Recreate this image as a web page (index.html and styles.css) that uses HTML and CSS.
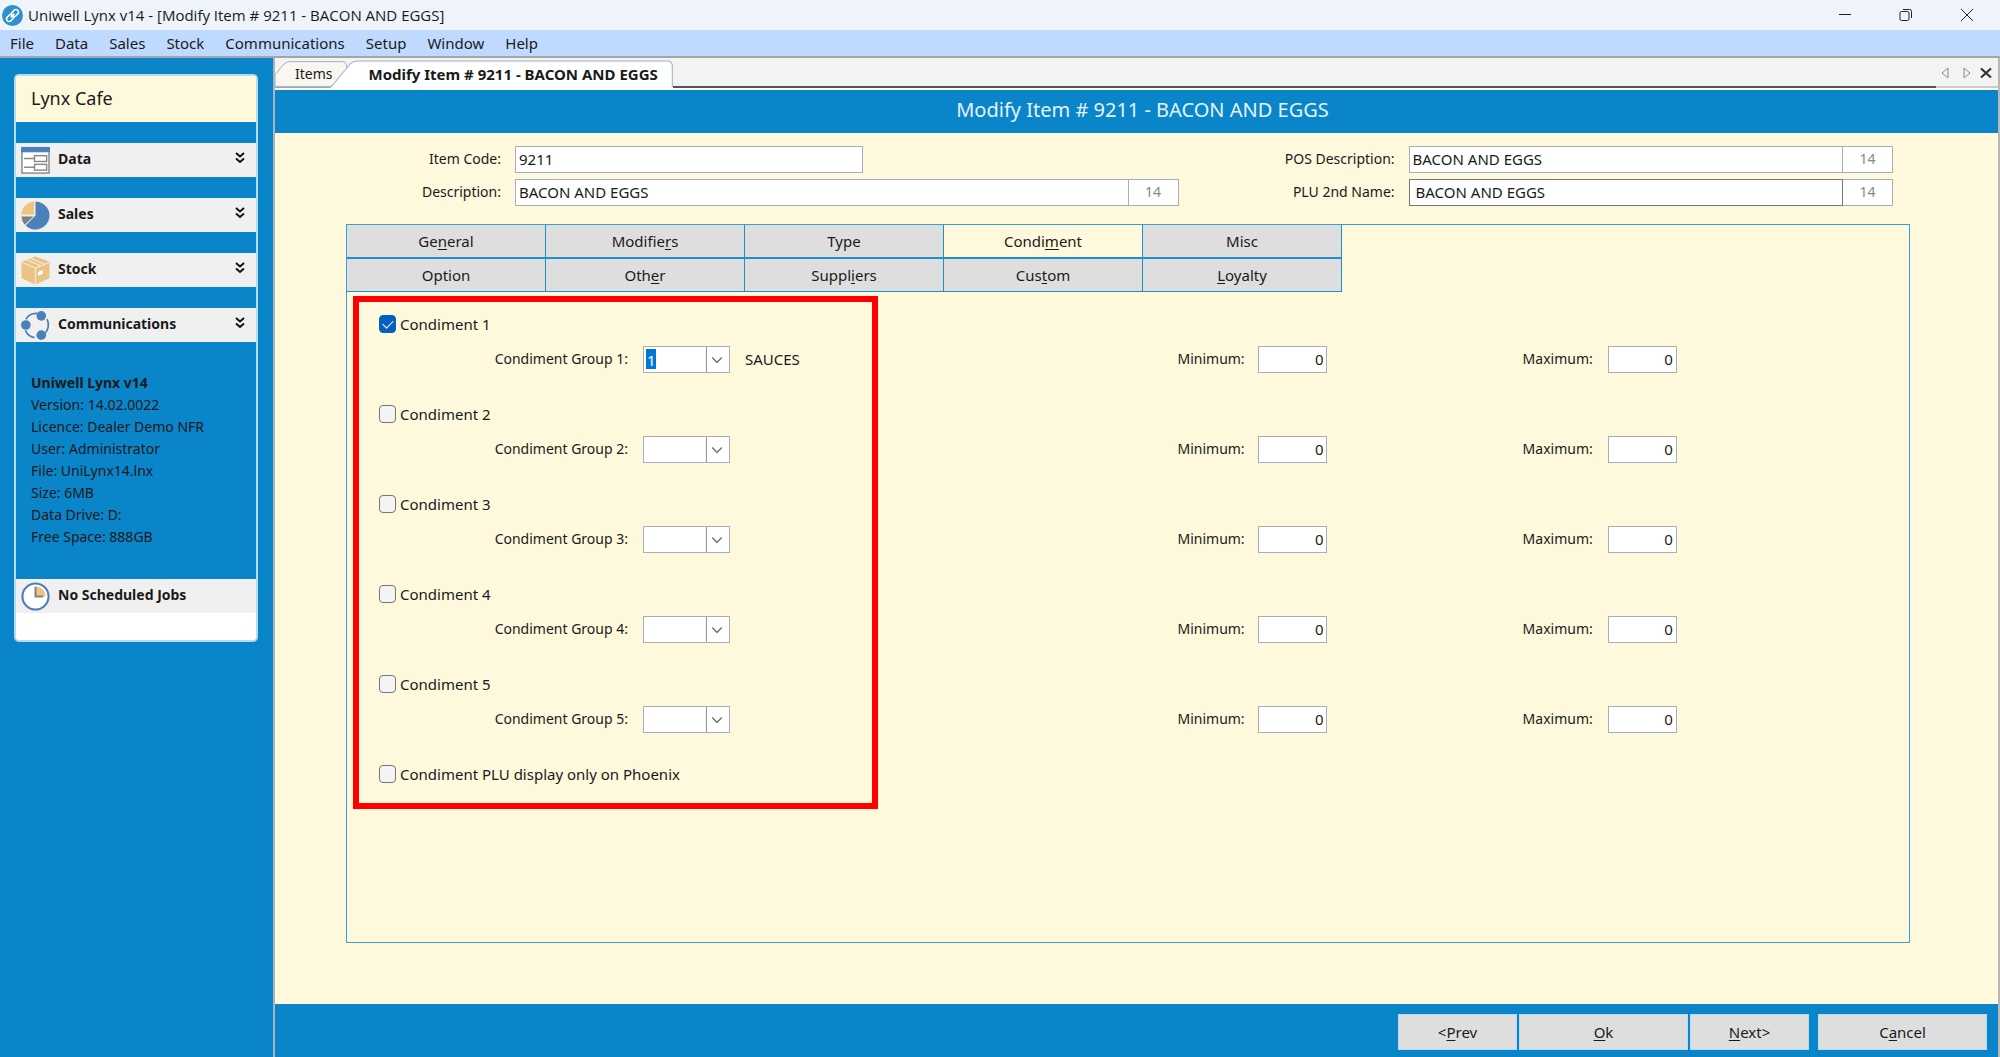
FILE: index.html
```html
<!DOCTYPE html>
<html lang="en">
<head>
    <meta charset="UTF-8">
    <meta name="viewport" content="width=device-width, initial-scale=1.0">
    <title>Uniwell Lynx v14</title>
    <link rel="stylesheet" href="styles.css">
</head>
<body>
    <header class="titlebar">
        <svg class="app-icon" viewBox="0 0 20 20">
            <circle cx="10" cy="10" r="10" fill="#2f8fcf"/>
            <g fill="none" stroke="#fff" stroke-width="1.4" transform="rotate(-45 10 10)">
                <rect x="3" y="7.6" width="7.6" height="4.8" rx="2.4"/>
                <rect x="9.4" y="7.6" width="7.6" height="4.8" rx="2.4"/>
                <path d="M7.5 10h5"/>
            </g>
        </svg>
        <span class="window-title">Uniwell Lynx v14 - [Modify Item # 9211 - BACON AND EGGS]</span>
        <div class="window-buttons">
            <button type="button" aria-label="Minimize"><svg viewBox="0 0 14 14"><path d="M1 6.5h12"/></svg></button>
            <button type="button" aria-label="Restore"><svg viewBox="0 0 14 14"><rect x="1" y="3.5" width="9" height="9" rx="1.5"/><path d="M4 1.5h6.500a2 2 0 0 1 2 2v6.500"/></svg></button>
            <button type="button" aria-label="Close"><svg viewBox="0 0 14 14"><path d="M1 1l12 12M13 1L1 13"/></svg></button>
        </div>
    </header>
    <nav class="menubar">
        <a href="#">File</a>
        <a href="#">Data</a>
        <a href="#">Sales</a>
        <a href="#">Stock</a>
        <a href="#">Communications</a>
        <a href="#">Setup</a>
        <a href="#">Window</a>
        <a href="#">Help</a>
    </nav>

    <div class="workspace">
        <aside class="sidebar">
            <div class="side-panel">
                <div class="site-name">Lynx Cafe</div>
                <button type="button" class="side-item">
                    <svg class="side-icon" viewBox="0 0 30 28">
                        <rect x="1" y="1" width="28" height="26" fill="#fff" stroke="#8a8a8a" stroke-width="1.5"/>
                        <rect x="0" y="0" width="30" height="5.500" fill="#4c80bb"/>
                        <g fill="none" stroke="#8a8a8a" stroke-width="1.5">
                            <path d="M3 12h11M3 21h11"/>
                            <rect x="14" y="9" width="12.500" height="6" fill="#fff"/>
                            <rect x="14" y="18" width="12.500" height="6" fill="#fff"/>
                        </g>
                    </svg>
                    <span>Data</span>
                    <svg class="chevrons" viewBox="0 0 10 12"><path d="M1 1l4 3.500 4-3.500M1 6.500l4 3.500 4-3.500"/></svg>
                </button>
                <button type="button" class="side-item">
                    <svg class="side-icon" viewBox="0 0 30 30">
                        <path d="M15 0.500a14.500 14.500 0 1 1-10.200 24.800L15 15z" fill="#4c80bb"/>
                        <path d="M13.500 0.500V14H0.500A14 14 0 0 1 13.500 0.500z" fill="#ecc67f"/>
                        <path d="M0.500 16h12.500l-9.200 8.500A14 14 0 0 1 0.500 16z" fill="#808080"/>
                    </svg>
                    <span>Sales</span>
                    <svg class="chevrons" viewBox="0 0 10 12"><path d="M1 1l4 3.500 4-3.500M1 6.500l4 3.500 4-3.500"/></svg>
                </button>
                <button type="button" class="side-item">
                    <svg class="side-icon" viewBox="0 0 30 30">
                        <path d="M15 0.500l14.500 5.500v17L15 29.500 0.500 23V6z" fill="#eac284"/>
                        <path d="M0.500 6.500L15 12.500 29.500 6.500M15 12.500v17M6 4l14 6M10 2.500l14.500 6" fill="none" stroke="#f8ead2" stroke-width="1.2"/>
                        <path d="M17.500 16.500l5-2v4l-5 2z" fill="#fff"/>
                    </svg>
                    <span>Stock</span>
                    <svg class="chevrons" viewBox="0 0 10 12"><path d="M1 1l4 3.500 4-3.500M1 6.500l4 3.500 4-3.500"/></svg>
                </button>
                <button type="button" class="side-item">
                    <svg class="side-icon" viewBox="0 0 30 30">
                        <g fill="none" stroke="#4c80bb" stroke-width="1.8">
                            <path d="M5 8.500A13 13 0 0 1 17 2.500"/>
                            <path d="M27 8.500A13 13 0 0 1 24 24"/>
                            <path d="M4.500 20A13 13 0 0 0 14 27.500"/>
                        </g>
                        <g fill="#4c80bb">
                            <circle cx="21" cy="5" r="5"/>
                            <circle cx="5" cy="14.500" r="5"/>
                            <circle cx="21" cy="25" r="5"/>
                        </g>
                    </svg>
                    <span>Communications</span>
                    <svg class="chevrons" viewBox="0 0 10 12"><path d="M1 1l4 3.500 4-3.500M1 6.500l4 3.500 4-3.500"/></svg>
                </button>
                <div class="side-info">
                    <strong>Uniwell Lynx v14</strong>
                    <span>Version: 14.02.0022</span>
                    <span>Licence: Dealer Demo NFR</span>
                    <span>User: Administrator</span>
                    <span>File: UniLynx14.lnx</span>
                    <span>Size: 6MB</span>
                    <span>Data Drive: D:</span>
                    <span>Free Space: 888GB</span>
                </div>
                <div class="side-jobs">
                    <svg class="side-icon" viewBox="0 0 30 30">
                        <circle cx="15" cy="15" r="13.500" fill="#fff" stroke="#4c80bb" stroke-width="2.200"/>
                        <path d="M15 4.500A10.500 10.500 0 0 1 25.500 15H15z" fill="#ecc67f"/>
                        <path d="M15 5v10h8" fill="none" stroke="#808080" stroke-width="2"/>
                    </svg>
                    <span>No Scheduled Jobs</span>
                </div>
            </div>
        </aside>

        <main class="document">
            <div class="doc-tabs">
                <a href="#" class="doc-tab">
                    <svg class="tab-shape" viewBox="0 0 76 27"><path d="M0 15L9 4Q12 1 16 1H70Q75 1 75 6V27H0z"/></svg>
                    <span>Items</span>
                </a>
                <a href="#" class="doc-tab active">
                    <svg class="tab-shape" viewBox="0 0 340 27" preserveAspectRatio="none"><path d="M0 27L19 4Q22 1 26 1H334Q339 1 339 6V27"/></svg>
                    <span>Modify Item # 9211 - BACON AND EGGS</span>
                </a>
                <div class="tab-line"></div>
                <div class="tab-nav">
                    <button type="button" aria-label="Previous tab"><svg viewBox="0 0 12 12"><path d="M8 1v10L2 6z" fill="none" stroke="#888"/></svg></button>
                    <button type="button" aria-label="Next tab"><svg viewBox="0 0 12 12"><path d="M4 1v10l6-5z" fill="none" stroke="#888"/></svg></button>
                    <button type="button" aria-label="Close tab"><svg viewBox="0 0 12 12"><path d="M1 1.500l10 9M11 1.500L1 10.500" fill="none" stroke="#333" stroke-width="2.200"/></svg></button>
                </div>
            </div>
            <h1 class="doc-title">Modify Item # 9211 - BACON AND EGGS</h1>

            <form class="item-form">
                <div class="item-header">
                    <label for="itemCode">Item Code:</label>
                    <div class="field"><input type="text" id="itemCode" class="code-input" value="9211"></div>
                    <label for="posDescription">POS Description:</label>
                    <div class="field"><input type="text" id="posDescription" value="BACON AND EGGS"><output class="counter">14</output></div>
                    <label for="description">Description:</label>
                    <div class="field"><input type="text" id="description" value="BACON AND EGGS"><output class="counter">14</output></div>
                    <label for="pluName">PLU 2nd Name:</label>
                    <div class="field"><input type="text" id="pluName" class="plain-input" value="BACON AND EGGS"><output class="counter">14</output></div>
                </div>

                <section class="tab-panel">
                    <div class="panel-tabs">
                        <button type="button">Ge<u>n</u>eral</button>
                        <button type="button">Modifie<u>r</u>s</button>
                        <button type="button">Type</button>
                        <button type="button" class="active">Condi<u>m</u>ent</button>
                        <button type="button">Misc</button>
                        <button type="button">Option</button>
                        <button type="button">Oth<u>e</u>r</button>
                        <button type="button">Suppl<u>i</u>ers</button>
                        <button type="button">Cus<u>t</u>om</button>
                        <button type="button"><u>L</u>oyalty</button>
                    </div>

                    <div class="condiments">
                        <div class="highlight"></div>
                        <div class="condiment">
                            <label class="check"><input type="checkbox" checked>Condiment 1</label>
                            <div class="condiment-row">
                                <label for="group1">Condiment Group 1:</label>
                                <div class="combo"><select id="group1" class="focused"><option>1</option></select><svg viewBox="0 0 24 26"><path d="M1 0v26" stroke="#888"/><path d="M7 11l5 5 5-5" stroke="#777" stroke-width="1.500"/></svg></div>
                                <span class="group-name">SAUCES</span>
                                <label for="min1">Minimum:</label>
                                <input type="text" id="min1" value="0">
                                <label for="max1">Maximum:</label>
                                <input type="text" id="max1" value="0">
                            </div>
                        </div>
                        <div class="condiment">
                            <label class="check"><input type="checkbox">Condiment 2</label>
                            <div class="condiment-row">
                                <label for="group2">Condiment Group 2:</label>
                                <div class="combo"><select id="group2"><option></option></select><svg viewBox="0 0 24 26"><path d="M1 0v26" stroke="#888"/><path d="M7 11l5 5 5-5" stroke="#777" stroke-width="1.500"/></svg></div>
                                <span class="group-name"></span>
                                <label for="min2">Minimum:</label>
                                <input type="text" id="min2" value="0">
                                <label for="max2">Maximum:</label>
                                <input type="text" id="max2" value="0">
                            </div>
                        </div>
                        <div class="condiment">
                            <label class="check"><input type="checkbox">Condiment 3</label>
                            <div class="condiment-row">
                                <label for="group3">Condiment Group 3:</label>
                                <div class="combo"><select id="group3"><option></option></select><svg viewBox="0 0 24 26"><path d="M1 0v26" stroke="#888"/><path d="M7 11l5 5 5-5" stroke="#777" stroke-width="1.500"/></svg></div>
                                <span class="group-name"></span>
                                <label for="min3">Minimum:</label>
                                <input type="text" id="min3" value="0">
                                <label for="max3">Maximum:</label>
                                <input type="text" id="max3" value="0">
                            </div>
                        </div>
                        <div class="condiment">
                            <label class="check"><input type="checkbox">Condiment 4</label>
                            <div class="condiment-row">
                                <label for="group4">Condiment Group 4:</label>
                                <div class="combo"><select id="group4"><option></option></select><svg viewBox="0 0 24 26"><path d="M1 0v26" stroke="#888"/><path d="M7 11l5 5 5-5" stroke="#777" stroke-width="1.500"/></svg></div>
                                <span class="group-name"></span>
                                <label for="min4">Minimum:</label>
                                <input type="text" id="min4" value="0">
                                <label for="max4">Maximum:</label>
                                <input type="text" id="max4" value="0">
                            </div>
                        </div>
                        <div class="condiment">
                            <label class="check"><input type="checkbox">Condiment 5</label>
                            <div class="condiment-row">
                                <label for="group5">Condiment Group 5:</label>
                                <div class="combo"><select id="group5"><option></option></select><svg viewBox="0 0 24 26"><path d="M1 0v26" stroke="#888"/><path d="M7 11l5 5 5-5" stroke="#777" stroke-width="1.500"/></svg></div>
                                <span class="group-name"></span>
                                <label for="min5">Minimum:</label>
                                <input type="text" id="min5" value="0">
                                <label for="max5">Maximum:</label>
                                <input type="text" id="max5" value="0">
                            </div>
                        </div>
                        <label class="check"><input type="checkbox">Condiment PLU display only on Phoenix</label>
                    </div>
                </section>

                <footer class="actions">
                    <button type="button">&lt;<u>P</u>rev</button>
                    <button type="submit" class="wide"><u>O</u>k</button>
                    <button type="button"><u>N</u>ext&gt;</button>
                    <button type="button" class="wide cancel">C<u>a</u>ncel</button>
                </footer>
            </form>
        </main>
    </div>
</body>
</html>
```

FILE: styles.css
```css
* {
    box-sizing: border-box;
}
body {
    font-family: "Noto Sans", "Open Sans", sans-serif;
    font-size: 14px;
    line-height: 22px;
    color: #1a1a1a;
    display: flex;
    flex-direction: column;
    min-height: 100vh;
    margin: 0;
    background-color: #0a85c9;
}
a {
    color: inherit;
    text-decoration: none;
}
button, input, select {
    font: inherit;
    color: inherit;
}
button {
    padding: 0;
    border: none;
    background: none;
    cursor: pointer;
}
u {
    text-underline-offset: 2px;
}

/* window frame */
.titlebar {
    display: flex;
    align-items: center;
    height: 30px;
    padding-left: 2px;
    background-color: #eef4f9;
    font-family: "Open Sans", sans-serif;
    font-size: 15px;
}
.app-icon {
    width: 21px;
    height: 21px;
    margin-right: 5px;
}
.window-title {
    flex: 1;
}
.window-buttons {
    display: flex;
    padding-right: 3px;
}
.window-buttons button {
    display: flex;
    align-items: center;
    justify-content: center;
    width: 61px;
    height: 30px;
}
.window-buttons svg {
    width: 14px;
    height: 14px;
    fill: none;
    stroke: #222;
}
.menubar {
    display: flex;
    align-items: center;
    gap: 21px;
    height: 26px;
    padding-left: 10px;
    background-color: #c0daff;
    font-size: 15px;
}
.workspace {
    display: flex;
    flex: 1;
    border-top: 2px solid #a5a5a5;
}

/* sidebar */
.sidebar {
    width: 275px;
    flex-shrink: 0;
    padding: 16px 14px;
    border-right: 2px solid #a9b4bb;
}
.side-panel {
    width: 244px;
    padding-bottom: 27px;
    border: 2px solid #b5dcf2;
    border-radius: 5px;
    background-color: #fff;
    overflow: hidden;
}
.site-name {
    height: 46px;
    padding: 0 15px;
    background-color: #fef9dc;
    font-size: 18px;
    line-height: 44px;
}
.side-item, .side-jobs {
    display: flex;
    align-items: center;
    gap: 8px;
    width: 100%;
    height: 34px;
    padding: 0 11px 0 5px;
    background-color: #f0f0f0;
    font-weight: bold;
    text-align: left;
}
.side-item {
    height: 55px;
    border-top: 21px solid #0a85c9;
}
.side-item span, .side-jobs span {
    flex: 1;
    padding-bottom: 2px;
}
.side-icon {
    width: 29px;
    height: 29px;
}
.chevrons {
    width: 10px;
    height: 12px;
    margin-bottom: 5px;
    fill: none;
    stroke: #111;
    stroke-width: 2;
}
.side-info {
    display: flex;
    flex-direction: column;
    padding: 30px 15px 31px;
    background-color: #0a85c9;
}

/* document area */
.document {
    display: flex;
    flex-direction: column;
    flex: 1;
    min-width: 0;
    border-right: 2px solid #b8b8b8;
    background-color: #fef9dc;
}
.doc-tabs {
    display: flex;
    height: 32px;
    padding-top: 2px;
    border-bottom: 2px solid #fff;
    background-color: #f3f3f3;
}
.doc-tab {
    position: relative;
    height: 28px;
    padding: 1px 15px 0 20px;
    line-height: 26px;
    border-bottom: 1px solid #a0a8b5;
}
.doc-tab span {
    position: relative;
}
.doc-tab.active {
    margin-left: -17px;
    padding: 1px 15px 0 38px;
    border-bottom-color: #fff;
    font-size: 15px;
    font-weight: bold;
}
.tab-shape {
    position: absolute;
    left: 0;
    top: 0;
    width: 100%;
    height: 27px;
    fill: #f8f7f0;
    stroke: #9bb0c6;
}
.active .tab-shape {
    fill: #fff;
}
.tab-line {
    flex: 1;
    border-bottom: 2px solid #555;
}
.tab-nav {
    display: flex;
    gap: 8px;
    padding: 0 6px 0 4px;
    border-bottom: 2px solid #ccc;
}
.tab-nav svg {
    display: block;
    width: 12px;
    height: 12px;
}
.doc-title {
    margin: 0;
    padding: 0 0 3px 12px;
    background-color: #0a85c9;
    color: #e3f3fc;
    font-size: 20px;
    font-weight: normal;
    line-height: 40px;
    text-align: center;
}
.item-form {
    display: flex;
    flex-direction: column;
    flex: 1;
}
.item-header {
    display: grid;
    grid-template-columns: 226px 663fr 202px 484fr;
    gap: 6px 14px;
    padding: 13px 105px 18px 0;
}
.item-header label, .condiment-row label {
    text-align: right;
    line-height: 26px;
    white-space: nowrap;
}
.field {
    display: flex;
}
input[type="text"] {
    flex: 1;
    width: 100%;
    min-width: 0;
    height: 27px;
    padding: 0 3px 2px;
    border: 1px solid #aaadb5;
    background-color: #fff;
    font-size: 15px;
}
.field .code-input {
    flex: none;
    width: 348px;
}
.field .plain-input {
    padding-left: 6px;
    border-color: #777;
}
.counter {
    width: 50px;
    height: 27px;
    border: 1px solid #aaadb5;
    border-left: none;
    background-color: #fff;
    color: #888;
    line-height: 24px;
    text-align: center;
}

/* tab panel */
.tab-panel {
    flex: 1;
    margin: 0 88px 61px 71px;
    border: 1px solid #3b9fd4;
}
.panel-tabs {
    display: grid;
    grid-template-columns: repeat(5, 198px);
    gap: 2px 1px;
    width: fit-content;
    border-right: 1px solid #1c8fcd;
    border-bottom: 1px solid #1c8fcd;
    background-color: #1c8fcd;
}
.panel-tabs button {
    height: 32px;
    background-color: #dedede;
    font-size: 15px;
}
.panel-tabs .active {
    background-color: #fef9dc;
}
.condiments {
    position: relative;
    padding-top: 20px;
}
/* red frame drawn over the condiment settings */
.highlight {
    position: absolute;
    left: 6px;
    top: 4px;
    width: 525px;
    height: 513px;
    border: 6px solid #f00;
    pointer-events: none;
}
.condiment {
    height: 90px;
}
.check {
    display: flex;
    align-items: center;
    gap: 4px;
    width: fit-content;
    height: 24px;
    margin-left: 32px;
    font-size: 15px;
}
.check input {
    appearance: none;
    width: 17px;
    height: 18px;
    margin: 0;
    border: 1px solid #777;
    border-radius: 4px;
    background-color: #f4f4f4;
}
.check input:checked {
    display: flex;
    align-items: center;
    justify-content: center;
    border-color: #0560bd;
    background-color: #0560bd;
}
.check input:checked::before {
    content: "";
    width: 9px;
    height: 5px;
    margin-bottom: 3px;
    border-left: 1px solid #fff;
    border-bottom: 1px solid #fff;
    transform: rotate(-45deg);
}
.condiment-row {
    display: grid;
    grid-template-columns: 281px 87px 417fr 66px 69px 250fr 69px 217fr;
    gap: 15px;
    margin-top: 10px;
    line-height: 26px;
}
.condiment-row input {
    text-align: right;
}
.group-name {
    font-size: 15px;
}
.combo {
    position: relative;
}
.combo select {
    appearance: none;
    display: block;
    width: 100%;
    height: 27px;
    padding: 0 3px 2px;
    border: 1px solid #aaadb5;
    border-radius: 0;
    background-color: #fff;
    font-size: 15px;
}
.combo .focused {
    background-image: linear-gradient(#0078d7, #0078d7);
    background-position: 2px 2px;
    background-size: 10px 20px;
    background-repeat: no-repeat;
    color: #fff;
}
.combo svg {
    position: absolute;
    right: 1px;
    top: 1px;
    width: 24px;
    height: 25px;
    fill: none;
    pointer-events: none;
}
.actions {
    display: flex;
    justify-content: flex-end;
    gap: 2px;
    padding: 10px 11px 7px;
    background-color: #0a85c9;
}
.actions button {
    width: 119px;
    height: 36px;
    border: 1px solid #b5dcf2;
    background-color: #dedede;
    font-size: 15px;
}
.actions .wide {
    width: 169px;
}
.actions .cancel {
    margin-left: 7px;
}
```
